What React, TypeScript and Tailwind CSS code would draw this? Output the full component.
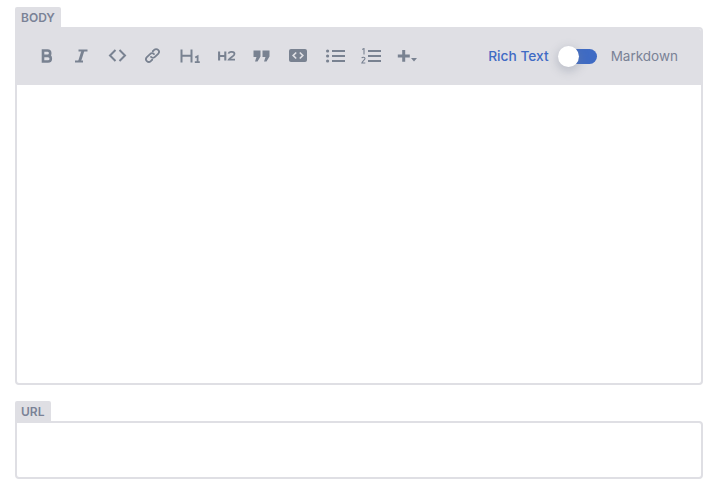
import React from "react";

const c = "#798291";

function IconB() {
  return <svg width="12" height="14" viewBox="0 0 12 14" fill="none" stroke={c} strokeWidth="2.6"><path d="M2 1.500h4.500a2.600 2.600 0 0 1 0 5.400H2zM2 6.900h5a2.800 2.800 0 0 1 0 5.600H2z" /></svg>;
}
function IconI() {
  return <svg width="14" height="14" viewBox="0 0 14 14" fill="none" stroke={c}><path d="M4.500 1.500h9M1 12.500h8" strokeWidth="2.2" /><path d="M9 1.500 5.500 12.500" strokeWidth="2.8" /></svg>;
}
function IconCode() {
  return <svg width="19" height="13" viewBox="0 0 19 13" fill="none" stroke={c} strokeWidth="2"><path d="M7.500 1 2 6.500l5.500 5.500M11.500 1 17 6.500 11.500 12" /></svg>;
}
function IconLink() {
  return <svg width="17" height="17" viewBox="0 0 16 16" fill="none" stroke={c} strokeWidth="1.700" strokeLinecap="round"><path d="M6.600 9.400a2.600 2.600 0 0 0 3.700 0l3-3a2.600 2.600 0 0 0-3.700-3.700L8.300 4" /><path d="M9.400 6.600a2.600 2.600 0 0 0-3.700 0l-3 3a2.600 2.600 0 0 0 3.700 3.700L7.700 12" /></svg>;
}
function IconH1() {
  return <svg width="21" height="14" viewBox="0 0 21 14" fill="none" stroke={c}><path d="M1.500 0.500v13M11.500 0.500v13M1.500 6.800h10" strokeWidth="2" /><path d="M15.200 8.500l2.400-1.200v6M14.800 13.200h5" strokeWidth="1.800" /></svg>;
}
function IconH2() {
  return <svg width="18" height="10" viewBox="0 0 18 10" fill="none" stroke={c}><path d="M1.100 0.500v9M7.300 0.500v9M1.100 5h6.200" strokeWidth="2.100" /><path d="M10.500 2.600c.4-2.300 6-2.400 6 .4 0 2.200-4.500 3.300-5.700 5.700h6.200" strokeWidth="1.800" /></svg>;
}
function IconQuote() {
  return <svg width="17" height="12" viewBox="0 0 17 12" fill={c}><path d="M0.500 0.500h7v6L4.500 11.500H2l1.500-4.500h-3zM9.500 0.500h7v6l-3 5H11l1.500-4.500h-3z" /></svg>;
}
function IconEmbed() {
  return <svg width="18" height="13" viewBox="0 0 18 13"><rect width="18" height="13" rx="2" fill={c} /><path d="M7.200 3.500 4.200 6.500l3 3M10.800 3.500l3 3-3 3" fill="none" stroke="#dfdfe4" strokeWidth="1.700" /></svg>;
}
function IconUl() {
  return <svg width="19" height="14" viewBox="0 0 19 14" fill={c}><circle cx="1.600" cy="2" r="1.600" /><circle cx="1.600" cy="7" r="1.600" /><circle cx="1.600" cy="12" r="1.600" /><rect x="6" y="1" width="13" height="2" /><rect x="6" y="6" width="13" height="2" /><rect x="6" y="11" width="13" height="2" /></svg>;
}
function IconOl() {
  return <svg width="20" height="16" viewBox="0 0 20 16" fill={c}><rect x="7" y="2" width="13" height="2" /><rect x="7" y="7" width="13" height="2" /><rect x="7" y="12" width="13" height="2" /><path d="M1.200 1.400 3 .5v6" fill="none" stroke={c} strokeWidth="1.100" /><path d="M.8 10.200c.3-1.300 3.200-1.300 3.200.3 0 1.300-2.400 2.400-3.100 4.500h3.400" fill="none" stroke={c} strokeWidth="1.100" /></svg>;
}
function IconPlus() {
  return <svg width="20" height="14" viewBox="0 0 20 14" fill={c}><path d="M5.200 1h3v4.400h4.600v3H8.200v4.400h-3V8.400H.8v-3h4.400z" /><path d="M14 9h6l-3 3.500z" /></svg>;
}

function Tab({ children, width }: { children: React.ReactNode; width: string }) {
  return (
    <div className={`${width} h-[20px] rounded-t-[2px] bg-[#dfdfe4] pl-[6px] text-[12px] font-semibold leading-[21px] text-[#7a8296]`}>
      {children}
    </div>
  );
}

export default function App() {
  return (
    <div className="h-[489px] w-[714px] overflow-hidden bg-white pl-[15px] pr-[11px] pt-[7px] font-['Inter',sans-serif]">
      <Tab width="w-[46px]">BODY</Tab>
      <div className="h-[358px] overflow-hidden rounded-b-[4px] rounded-tr-[4px] border-2 border-[#dfdfe4]">
        <div className="flex h-[56px] items-center bg-[#dfdfe4] pb-[3px] pl-[24px]">
          <div className="flex items-center gap-[19px]">
            <div className="flex w-[12px] justify-center"><IconB /></div>
            <div className="ml-[2px]"><IconI /></div>
            <div className="ml-[1px]"><IconCode /></div>
            <div className="-ml-[2px]"><IconLink /></div>
            <div><IconH1 /></div>
            <div className="-ml-[2px]"><IconH2 /></div>
            <div className="-ml-[2px]"><IconQuote /></div>
            <div><IconEmbed /></div>
            <div><IconUl /></div>
            <div className="-ml-[3px]"><IconOl /></div>
            <div className="-ml-[3px]"><IconPlus /></div>
          </div>
          <div className="ml-auto flex items-center pr-[23px] pt-[1px] text-[13.5px]">
            <span className="text-[13.75px] font-medium text-[#3f6bc4]">Rich Text</span>
            <div className="relative ml-[9px] mr-[14px] h-[15px] w-[39px]">
              <div className="absolute right-0 top-0 h-[15px] w-[30px] rounded-full bg-[#3f6bc4]" />
              <div className="absolute left-0 top-[-3px] h-[21px] w-[21px] rounded-full bg-white shadow-[0_3px_8px_2px_rgba(120,130,150,0.3)]" />
            </div>
            <span className="text-[#7a8296]">Markdown</span>
          </div>
        </div>
      </div>
      <div className="mt-[16px]">
        <Tab width="w-[36px]">URL</Tab>
        <div className="h-[58px] rounded-b-[4px] rounded-tr-[4px] border-2 border-[#dfdfe4]" />
      </div>
    </div>
  );
}
